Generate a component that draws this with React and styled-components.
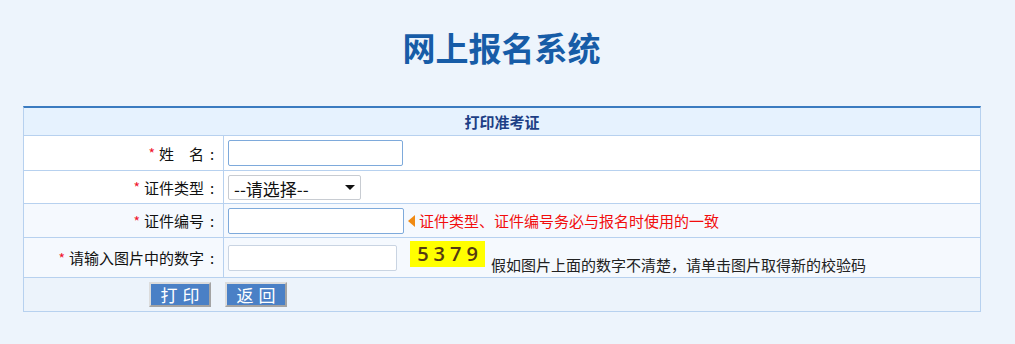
import React from 'react';
import styled, { createGlobalStyle } from 'styled-components';

const GlobalStyle = createGlobalStyle`
  html, body {
    margin: 0;
    padding: 0;
    background: #edf4fc;
    font-family: "Noto Sans CJK SC", "Noto Sans", sans-serif;
  }
`;

const Page = styled.div`
  width: 1015px;
  height: 344px;
  background: #edf4fc;
  overflow: hidden;
`;

const Title = styled.h1`
  margin: 0;
  padding: 27px 12px 0 0;
  height: 50px;
  line-height: 40px;
  text-align: center;
  font-size: 33px;
  font-weight: bold;
  color: #175ca7;
`;

const Form = styled.div`
  margin: 29px 0 0 23px;
  width: 956px;
  border: 1px solid #b7d1ef;
  border-top: 2px solid #3b7bc0;
  display: grid;
  grid-template-columns: 200px 1fr;
`;

const Header = styled.div`
  grid-column: 1 / -1;
  height: 27px;
  line-height: 27px;
  background: #e6f2fe;
  text-align: center;
  font-size: 15px;
  font-weight: bold;
  color: #1d3f86;
  border-bottom: 1px solid #b7d1ef;
`;

const Label = styled.div`
  height: ${p => p.$h}px;
  background: ${p => p.$bg};
  border-bottom: 1px solid #b7d1ef;
  border-right: 1px solid #b7d1ef;
  display: flex;
  align-items: center;
  justify-content: flex-end;
  padding-right: 3px;
  font-size: 15px;
  color: #111;
`;

const Star = styled.span`
  color: #f0142d;
  margin-right: 4px;
  font-size: 14px;
`;

const Colon = styled.span`
  display: inline-block;
  width: 16px;
  text-align: center;
`;

const Field = styled.div`
  height: ${p => p.$h}px;
  background: ${p => p.$bg};
  border-bottom: 1px solid #b7d1ef;
  display: flex;
  align-items: center;
  padding-left: 4px;
  font-size: 15px;
  color: #222;
`;

const Input = styled.input`
  box-sizing: border-box;
  width: ${p => p.$w}px;
  height: 26px;
  margin: 0;
  padding: 0 4px;
  border: 1px solid ${p => (p.$focus ? '#7eaadb' : '#c9d4e2')};
  border-radius: 2px;
  background: #fff;
  outline: none;
  font-size: 15px;
  font-family: inherit;
`;

const SelectWrap = styled.span`
  position: relative;
  display: inline-flex;
`;

const Select = styled.select`
  box-sizing: border-box;
  width: 133px;
  height: 25px;
  margin: 0;
  padding: 0 0 0 5px;
  border: 1px solid #c8ccd2;
  border-radius: 2px;
  background: #fff;
  font-size: 17px;
  font-family: inherit;
  color: #111;
  appearance: none;
  -webkit-appearance: none;
  outline: none;
`;

const Caret = styled.span`
  position: absolute;
  right: 6px;
  top: 10px;
  width: 0;
  height: 0;
  border-left: 5px solid transparent;
  border-right: 5px solid transparent;
  border-top: 5px solid #111;
  pointer-events: none;
`;

const Hint = styled.span`
  display: flex;
  align-items: center;
  margin-left: 4px;
  color: #f20d0d;
  font-size: 15px;
`;

const Arrow = styled.span`
  width: 0;
  height: 0;
  border-top: 6px solid transparent;
  border-bottom: 6px solid transparent;
  border-right: 7px solid #f08a12;
  margin-right: 4px;
`;

const Captcha = styled.span`
  margin: 3px 6px 0 13px;
  width: 75px;
  height: 26px;
  background: #ffff00;
  color: #553a12;
  font-family: "Open Sans", sans-serif;
  font-weight: 600;
  font-size: 20px;
  letter-spacing: 5px;
  text-indent: 5px;
  line-height: 26px;
  text-align: center;
  align-self: flex-start;
  cursor: pointer;
`;

const Note = styled.span`
  margin-top: 14px;
`;

const Actions = styled.div`
  grid-column: 1 / -1;
  height: 33px;
  background: #ecf3fb;
  display: flex;
  align-items: center;
  gap: 14px;
  padding-left: 125px;
`;

const Button = styled.button`
  box-sizing: border-box;
  width: 62px;
  height: 25px;
  padding: 0;
  background: #4a80c6;
  color: #fff;
  border: 2px solid;
  border-color: #dcdcdc #a3a3a3 #a3a3a3 #dcdcdc;
  font-size: 17px;
  letter-spacing: 5px;
  text-indent: 5px;
  font-family: inherit;
  line-height: 21px;
`;

const rows = [
  { label: '姓\u3000名', h: 34, bg: '#ffffff' },
  { label: '证件类型', h: 32, bg: '#ffffff' },
  { label: '证件编号', h: 33, bg: '#f5f9fe' },
  { label: '请输入图片中的数字', h: 39, bg: '#f5f9fe' },
];

const RowLabel = ({ row }) => (
  <Label $h={row.h} $bg={row.bg}>
    <Star>*</Star>
    {row.label}
    <Colon>:</Colon>
  </Label>
);

export default function App() {
  return (
    <Page>
      <GlobalStyle />
      <Title>网上报名系统</Title>
      <Form>
        <Header>打印准考证</Header>

        <RowLabel row={rows[0]} />
        <Field $h={rows[0].h} $bg={rows[0].bg}>
          <Input $w={175} $focus autoFocus />
        </Field>

        <RowLabel row={rows[1]} />
        <Field $h={rows[1].h} $bg={rows[1].bg}>
          <SelectWrap>
            <Select defaultValue="">
              <option value="">--请选择--</option>
              <option value="1">身份证</option>
            </Select>
            <Caret />
          </SelectWrap>
        </Field>

        <RowLabel row={rows[2]} />
        <Field $h={rows[2].h} $bg={rows[2].bg}>
          <Input $w={176} $focus />
          <Hint><Arrow />证件类型、证件编号务必与报名时使用的一致</Hint>
        </Field>

        <RowLabel row={rows[3]} />
        <Field $h={rows[3].h} $bg={rows[3].bg}>
          <Input $w={169} />
          <Captcha>5379</Captcha>
          <Note>假如图片上面的数字不清楚，请单击图片取得新的校验码</Note>
        </Field>

        <Actions>
          <Button>打印</Button>
          <Button>返回</Button>
        </Actions>
      </Form>
    </Page>
  );
}
